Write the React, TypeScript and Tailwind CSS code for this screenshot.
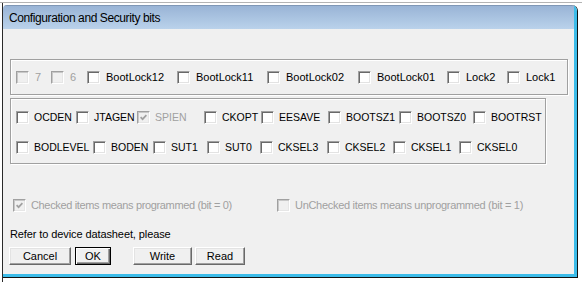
import React from "react";

type Item = { label: string; w: string; checked?: boolean; disabled?: boolean };

function Check({ checked, disabled }: { checked?: boolean; disabled?: boolean }) {
  return (
    <span
      className={
        disabled
          ? "flex items-center justify-center box-border w-[13px] h-[13px] shrink-0 border border-t-[#a0a0a0] border-l-[#a0a0a0] border-r-[#ffffff] border-b-[#ffffff] bg-[#f0f0f0] shadow-[inset_1px_1px_0_#c8c8c8,inset_-1px_-1px_0_#e6e6e6]"
          : "flex items-center justify-center box-border w-[13px] h-[13px] shrink-0 border border-t-[#a0a0a0] border-l-[#a0a0a0] border-r-[#ffffff] border-b-[#ffffff] bg-white shadow-[inset_1px_1px_0_#696969,inset_-1px_-1px_0_#e3e3e3]"
      }
    >
      {checked && (
        <svg width="7" height="7" viewBox="0 0 7 7">
          <path d="M0.6 3.2 L2.6 5.2 L6.4 1.2" stroke="#a0a0a0" strokeWidth="1.7" fill="none" />
        </svg>
      )}
    </span>
  );
}

const row1: Item[] = [
  { label: "7", w: "w-[35px]", disabled: true },
  { label: "6", w: "w-[36px]", disabled: true },
  { label: "BootLock12", w: "w-[90px]" },
  { label: "BootLock11", w: "w-[90px]" },
  { label: "BootLock02", w: "w-[91px]" },
  { label: "BootLock01", w: "w-[89px]" },
  { label: "Lock2", w: "w-[60px]" },
  { label: "Lock1", w: "w-[50px]" },
];

const row2: Item[] = [
  { label: "OCDEN", w: "w-[60px]" },
  { label: "JTAGEN", w: "w-[61px]" },
  { label: "SPIEN", w: "w-[67px]", checked: true, disabled: true },
  { label: "CKOPT", w: "w-[57px]" },
  { label: "EESAVE", w: "w-[67px]" },
  { label: "BOOTSZ1", w: "w-[71px]" },
  { label: "BOOTSZ0", w: "w-[74px]" },
  { label: "BOOTRST", w: "w-[60px]" },
];

const row3: Item[] = [
  { label: "BODLEVEL", w: "w-[77px]" },
  { label: "BODEN", w: "w-[60px]" },
  { label: "SUT1", w: "w-[54px]" },
  { label: "SUT0", w: "w-[53px]" },
  { label: "CKSEL3", w: "w-[67px]" },
  { label: "CKSEL2", w: "w-[66px]" },
  { label: "CKSEL1", w: "w-[66px]" },
  { label: "CKSEL0", w: "w-[60px]" },
];

function Row1Item({ it }: { it: Item }) {
  return (
    <div className={`flex items-center gap-[6px] shrink-0 ${it.w}`}>
      <Check checked={it.checked} disabled={it.disabled} />
      <span
        className={
          it.disabled
            ? "text-[11px] leading-none whitespace-nowrap text-[#a0a0a0]"
            : "text-[11px] leading-none whitespace-nowrap text-black"
        }
      >
        {it.label}
      </span>
    </div>
  );
}

function FuseItem({ it }: { it: Item }) {
  return (
    <div className={`flex items-center gap-[5px] shrink-0 ${it.w}`}>
      <Check checked={it.checked} disabled={it.disabled} />
      <span
        className={
          it.disabled
            ? "text-[10.5px] leading-none whitespace-nowrap text-[#a0a0a0]"
            : "text-[10.5px] leading-none whitespace-nowrap text-black"
        }
      >
        {it.label}
      </span>
    </div>
  );
}

const btn =
  "flex items-center justify-center h-[18px] box-border bg-[#f0f0f0] text-[11px] text-black border border-t-white border-l-white border-r-[#696969] border-b-[#696969] shadow-[inset_-1px_-1px_0_#a0a0a0,inset_1px_1px_0_#e3e3e3]";
const btnDefault =
  "flex items-center justify-center h-[18px] box-border bg-[#f0f0f0] text-[11px] text-black border border-black shadow-[inset_1px_1px_0_#ffffff,inset_-1px_-1px_0_#696969,inset_-2px_-2px_0_#a0a0a0]";

export default function App() {
  return (
    <div className="w-[582px] h-[282px] bg-white overflow-hidden font-['Liberation_Sans',Arial,sans-serif] flex flex-col">
      <div className="h-[2px] shrink-0" />
      <div className="h-[1px] shrink-0 bg-[#b4b4b4]" />
      <div className="flex flex-1 min-h-0">
        <div className="w-[2px] shrink-0 bg-white" />
        <div className="w-[1px] shrink-0 bg-[#2a2a2a]" />
        <div className="flex flex-col">
          <div className="h-[2px] shrink-0" />
          {/* window */}
          <div className="w-[575px] h-[273px] box-border flex flex-col rounded-tr-[6px] rounded-tl-[4px] overflow-hidden border-r border-b border-[#111111]">
            <div className="flex flex-col flex-1 border-r-[3px] border-b-[3px] border-[#3cbce9]">
              <div className="h-[24px] shrink-0 flex items-center pl-[6px] bg-gradient-to-b from-[#99b4d6] to-[#bad2eb] border-t border-[#7f97b6]">
                <span className="text-[12px] tracking-[-0.4px] text-black font-['Segoe_UI','Liberation_Sans',Arial,sans-serif]">
                  Configuration and Security bits
                </span>
              </div>
              <div className="flex-1 bg-[#f0f0f0] flex flex-col">
                {/* lock bits group */}
                <div className="mt-[30px] ml-[7px] w-[558px] h-[36px] box-border border border-[#a0a0a0] shadow-[inset_1px_1px_0_#ffffff,1px_1px_0_#ffffff] flex items-center pl-[5px]">
                  {row1.map((it) => (
                    <Row1Item key={it.label} it={it} />
                  ))}
                </div>
                {/* fuse group */}
                <div className="mt-[3px] ml-[7px] w-[536px] h-[66px] box-border border border-[#a0a0a0] shadow-[inset_1px_1px_0_#ffffff,1px_1px_0_#ffffff] flex flex-col pl-[5px] pt-[3px]">
                  <div className="h-[30px] flex items-center">
                    {row2.map((it) => (
                      <FuseItem key={it.label} it={it} />
                    ))}
                  </div>
                  <div className="h-[30px] flex items-center">
                    {row3.map((it) => (
                      <FuseItem key={it.label} it={it} />
                    ))}
                  </div>
                </div>
                {/* legend */}
                <div className="mt-[34px] h-[14px] flex items-center pl-[10px]">
                  <div className="w-[264px] flex items-center gap-[5px] shrink-0">
                    <Check checked disabled />
                    <span className="text-[11px] leading-none whitespace-nowrap tracking-[-0.35px] text-[#a0a0a0]">
                      Checked items means programmed (bit = 0)
                    </span>
                  </div>
                  <div className="flex items-center gap-[5px] shrink-0">
                    <Check disabled />
                    <span className="text-[11px] leading-none whitespace-nowrap tracking-[-0.3px] text-[#a0a0a0]">
                      UnChecked items means unprogrammed (bit = 1)
                    </span>
                  </div>
                </div>
                <div className="mt-[15px] h-[14px] flex items-center pl-[7px]">
                  <span className="text-[11px] leading-none tracking-[-0.1px] text-black whitespace-nowrap">
                    Refer to device datasheet, please
                  </span>
                </div>
                {/* buttons */}
                <div className="mt-[6px] flex items-center pl-[6px]">
                  <button className={`${btn} w-[62px]`}>Cancel</button>
                  <button className={`${btnDefault} w-[36px] ml-[4px]`}>OK</button>
                  <button className={`${btn} w-[59px] ml-[22px]`}>Write</button>
                  <button className={`${btn} w-[50px] ml-[3px]`}>Read</button>
                </div>
              </div>
            </div>
          </div>
        </div>
        <div className="flex-1 bg-white" />
      </div>
    </div>
  );
}
